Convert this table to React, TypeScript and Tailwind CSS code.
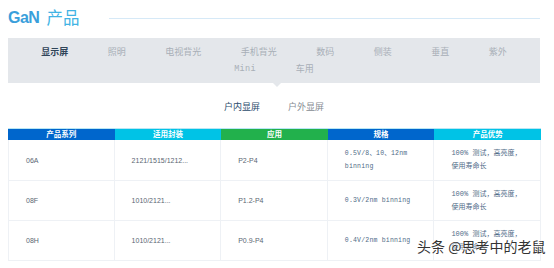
import React from "react";

const TABS_TOP = ["显示屏", "照明", "电视背光", "手机背光", "数码", "侧装", "垂直", "紫外"];
const TABS_BOTTOM = ["Mini", "车用"];

const HEADERS = [
  { label: "产品系列", bg: "bg-[#0066cc]" },
  { label: "适用封装", bg: "bg-[#00c3e6]" },
  { label: "应用", bg: "bg-[#22b14c]" },
  { label: "规格", bg: "bg-[#0066cc]" },
  { label: "产品优势", bg: "bg-[#00c3e6]" },
];

const ROWS = [
  { h: "h-[41px]", cells: ["06A", "2121/1515/1212...", "P2-P4", "0.5V/8、10、12nm\nbinning", "100% 测试，高亮度，\n使用寿命长"] },
  { h: "h-[40px]", cells: ["08F", "1010/2121...", "P1.2-P4", "0.3V/2nm binning", "100% 测试，高亮度，\n使用寿命长"] },
  { h: "h-[40px]", cells: ["08H", "1010/2121...", "P0.9-P4", "0.4V/2nm binning", "100% 测试，高亮度，\n使用寿命长"] },
];

function cellCls(ci: number) {
  if (ci === 3) return "font-['Liberation_Mono','Noto_Sans_CJK_SC',monospace] text-[6.5px] leading-[13px] text-[#4f6b87] tracking-[0.2px]";
  if (ci === 4) return "font-['Liberation_Mono','Noto_Sans_CJK_SC',monospace] text-[7px] leading-[13px] text-[#4f6b87]";
  return "text-[7px] leading-[13px] text-[#5a6672]";
}

export default function App() {
  return (
    <div className="relative w-[554px] h-[268px] overflow-hidden bg-white font-['Liberation_Sans','Noto_Sans_CJK_SC',sans-serif]">
      {/* Title */}
      <div className="flex items-center h-[22px] mt-[7px] ml-2 mr-[14px]">
        <span className="text-[16px] font-bold text-[#3a9fdb] tracking-[-0.5px] font-['Liberation_Sans_Narrow','Liberation_Sans',sans-serif]">GaN</span>
        <span className="ml-[7px] text-[16.5px] text-[#41b3e4]">产品</span>
        <div className="flex-1 ml-[30px] h-px bg-[#d6e9f7]" />
      </div>

      {/* Category bar */}
      <div className="relative mt-[9px] ml-2 w-[532px] bg-[#e4e7eb] pt-[6px] pb-[5px] text-[9px] leading-[17px]">
        <div className="flex justify-center gap-x-[39.5px]">
          {TABS_TOP.map((t, i) => (
            <span key={t} className={i === 0 ? "font-bold text-[#2f4458]" : "text-[#a8afb7]"}>{t}</span>
          ))}
        </div>
        <div className="flex justify-center gap-x-[40px]">
          {TABS_BOTTOM.map((t) => (
            <span key={t} className={t === "Mini" ? "text-[#a8afb7] font-['Liberation_Mono',monospace] text-[8.5px] tracking-[0.3px]" : "text-[#a8afb7]"}>{t}</span>
          ))}
        </div>
        <div className="absolute left-[265px] -bottom-[4px] w-0 h-0 border-l-[4px] border-r-[4px] border-t-[4px] border-l-transparent border-r-transparent border-t-[#e4e7eb]" />
      </div>

      {/* Sub tabs */}
      <div className="mt-[16px] ml-2 w-[532px] flex justify-center gap-[28px] text-[9px] leading-[17px]">
        <span className="text-[#2b4c6c]">户内显屏</span>
        <span className="text-[#858b92]">户外显屏</span>
      </div>

      {/* Table */}
      <div className="mt-[12px] ml-2 w-[533px]">
        <div className="grid grid-cols-5 border-t border-[#b9e6f4]">
          {HEADERS.map((h) => (
            <div key={h.label} className={`${h.bg} h-[11px] flex items-center justify-center text-white text-[7.5px] font-bold leading-none`}>
              {h.label}
            </div>
          ))}
        </div>
        {ROWS.map((r, ri) => (
          <div key={ri} className={`grid grid-cols-5 ${r.h}`}>
            {r.cells.map((c, ci) => (
              <div
                key={ci}
                className={`flex items-center pl-[17px] border-b border-r border-[#eef1f5] ${ci === 0 ? "border-l" : ""} ${cellCls(ci)}`}
              >
                <span className="whitespace-pre-line">{c}</span>
              </div>
            ))}
          </div>
        ))}
      </div>

      {/* Watermark */}
      <div className="absolute left-[417px] top-[237px] text-[14px] leading-[18px] text-[#333] [text-shadow:0_0_2px_#fff,0_0_2px_#fff] font-['Noto_Sans_CJK_SC',sans-serif]">
        头条 @思考中的老鼠
      </div>
    </div>
  );
}
